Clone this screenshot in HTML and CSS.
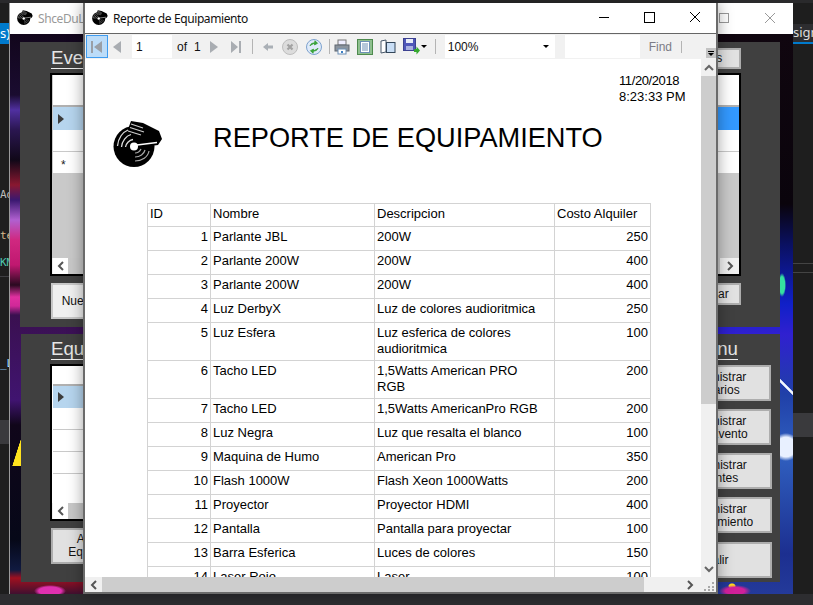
FILE: index.html
```html
<!DOCTYPE html>
<html lang="es">
<head>
<meta charset="utf-8">
<title>Reporte de Equipamiento</title>
<link rel="stylesheet" href="styles.css">
</head>
<body>
<svg class="sprite" width="0" height="0" aria-hidden="true">
  <symbol id="logo" viewBox="0 0 50 50">
    <circle cx="21" cy="26.500" r="20.500" fill="#000"/>
    <path d="M18 1 30 3 46 11 49 19 45 25 30 27 24 20 14 12Z" fill="#000"/>
    <path d="M4.500 26C5 18 10 12 15 10M8.500 27C9 21 13 16 18 14.500M12.500 27C13 24 16 20 20 19.500" fill="none" stroke="#ddd" stroke-width="1.300"/>
    <path d="M18 4 30 8M17 7.500 31 12M15 11 28 15" fill="none" stroke="#ccc" stroke-width="1.200"/>
    <path d="M24 25 44 22.500" fill="none" stroke="#fff" stroke-width="1.600"/>
    <path d="M28 29C27 31 25 33 22 33M32 30C31 34 27 37 22 37M36 31C35 37 29 41 22 41" fill="none" stroke="#aaa" stroke-width="1.200"/>
    <circle cx="21" cy="26.500" r="4" fill="#fff"/>
  </symbol>
  <symbol id="chev-l" viewBox="0 0 10 10"><path d="M7 1 3 5 7 9" fill="none" stroke="#555" stroke-width="2"/></symbol>
  <symbol id="chev-r" viewBox="0 0 10 10"><path d="M3 1 7 5 3 9" fill="none" stroke="#555" stroke-width="2"/></symbol>
</svg>

<div class="desktop">
  <div class="ide-left">
    <div class="ide-tab">s)</div>
    <div class="ide-code ad">Ad</div>
    <div class="ide-code te">te</div>
    <div class="ide-code km">KM</div>
    <div class="ide-rule"></div>
    <div class="ide-code ll">_L</div>
    <div class="ide-band"></div>
  </div>
  <div class="ide-right">
    <div class="ide-tab-r">sign</div>
    <div class="ide-rule r1"></div>
    <div class="ide-rule r2"></div>
    <div class="ide-band r3"></div>
  </div>

  <section class="win back">
    <header class="back-title">
      <svg class="t-icon"><use href="#logo"/></svg>
      <span class="back-name">ShceDuLe</span>
      <span class="back-ctl">
        <svg width="10" height="10" viewBox="0 0 10 10"><rect x=".5" y=".5" width="9" height="9" fill="none" stroke="#999"/></svg>
        <svg width="10" height="10" viewBox="0 0 10 10"><path d="M0 0 10 10M10 0 0 10" stroke="#999"/></svg>
      </span>
    </header>
    <div class="back-body">
      <div class="panel panel-a">
        <div class="p-head">
          <h2 class="p-title">Eventos</h2>
          <button class="btn btn-rep">Reportes</button>
        </div>
        <div class="dgrid grid-a">
          <div class="dg-row hd-a"><i class="rh"></i></div>
          <div class="dg-row sel"><i class="rh"><b class="arrow"></b></i><i class="fill"></i></div>
          <div class="dg-row"><i class="rh"></i></div>
          <div class="dg-row"><i class="rh star">*</i></div>
          <div class="dg-scroll">
            <span class="sb-end"><svg class="ch"><use href="#chev-l"/></svg></span>
            <span class="sb-thumb"></span>
            <span class="sb-end"><svg class="ch"><use href="#chev-r"/></svg></span>
          </div>
        </div>
        <div class="p-foot">
          <button class="btn btn-new">Nuevo</button>
          <button class="btn btn-del">Eliminar</button>
        </div>
      </div>

      <div class="panel panel-b">
        <div class="col-left">
          <div class="p-head head-b"><h2 class="p-title">Equipos</h2></div>
          <div class="dgrid grid-b">
            <div class="dg-row hd-b"><i class="rh"></i></div>
            <div class="dg-row sel-b"><i class="rh"><b class="arrow"></b></i></div>
            <div class="dg-row"><i class="rh"></i></div>
            <div class="dg-row"><i class="rh"></i></div>
            <div class="dg-row"><i class="rh"></i></div>
            <div class="dg-scroll">
              <span class="sb-end"><svg class="ch"><use href="#chev-l"/></svg></span>
              <span class="sb-thumb"></span>
            </div>
          </div>
          <button class="btn btn-add">Alta<br>Equipo</button>
        </div>
        <div class="col-menu">
          <div class="p-head head-m"><h2 class="p-title">Menu</h2></div>
          <div class="menu">
            <button class="btn m-btn">Administrar<br>Usuarios</button>
            <button class="btn m-btn">Administrar<br>Tipo Evento</button>
            <button class="btn m-btn wide">Administrar<br>Clientes</button>
            <button class="btn m-btn wide">Administrar<br>Equipamiento</button>
            <button class="btn m-btn wide exit">Salir</button>
          </div>
        </div>
      </div>
    </div>
  </section>

  <section class="win front">
    <header class="f-title">
      <svg class="t-icon"><use href="#logo"/></svg>
      <span class="f-name">Reporte de Equipamiento</span>
      <span class="f-ctl">
        <svg width="12" height="12" viewBox="0 0 12 12"><path d="M0 5.500H10" stroke="#000"/></svg>
        <svg width="12" height="12" viewBox="0 0 12 12"><rect x=".5" y=".5" width="10" height="10" fill="none" stroke="#000"/></svg>
        <svg width="12" height="12" viewBox="0 0 12 12"><path d="M1 0 11 10M11 0 1 10" stroke="#000"/></svg>
      </span>
    </header>

    <div class="toolbar">
      <span class="tb-btn first"><svg width="16" height="16" viewBox="0 0 16 16"><path d="M2 2H4V14H2ZM13 2V14L5 8Z" fill="#9a9fa6"/></svg></span>
      <span class="tb-ico w-prev"><svg width="10" height="14" viewBox="0 0 10 14"><path d="M9 1V13L1 7Z" fill="#a9adb2"/></svg></span>
      <span class="tb-input page">1</span>
      <span class="tb-text of">of</span>
      <span class="tb-text total">1</span>
      <span class="tb-ico w-next"><svg width="10" height="14" viewBox="0 0 10 14"><path d="M1 1V13L9 7Z" fill="#a9adb2"/></svg></span>
      <span class="tb-ico w-last"><svg width="12" height="14" viewBox="0 0 12 14"><path d="M1 1V13L8 7ZM9 1H11V13H9Z" fill="#a9adb2"/></svg></span>
      <span class="sep s1"></span>
      <span class="tb-ico w-back"><svg width="12" height="12" viewBox="0 0 12 12"><path d="M1 6 6 2V4.500H11V7.500H6V10Z" fill="#aab0b6"/></svg></span>
      <span class="tb-ico w-stop"><svg width="16" height="16" viewBox="0 0 16 16"><circle cx="8" cy="8" r="7.500" fill="#dcdcdc" stroke="#bdbdbd"/><path d="M5.500 5.500 10.500 10.500M10.500 5.500 5.500 10.500" stroke="#a2a2a2" stroke-width="2.200"/></svg></span>
      <span class="tb-ico w-ref"><svg width="16" height="16" viewBox="0 0 16 16"><circle cx="8" cy="8" r="7.500" fill="#dfeafa" stroke="#7da2ce"/><path d="M4 7C4.500 5 6.500 3.500 9 4.200M9 1.800 11.500 4.300 8.500 5.800Z" fill="#39a33a" stroke="#39a33a"/><path d="M12 9C11.500 11 9.500 12.500 7 11.800M7 14.200 4.500 11.700 7.500 10.200Z" fill="#39a33a" stroke="#39a33a"/></svg></span>
      <span class="sep s2"></span>
      <span class="tb-ico w-print"><svg width="16" height="16" viewBox="0 0 16 16"><rect x="4" y="1" width="8" height="5" fill="#eef" stroke="#777"/><rect x="1" y="6" width="14" height="6" fill="#8b949e" stroke="#5f6770"/><rect x="4" y="10" width="8" height="5" fill="#fff" stroke="#6d8fb5"/><rect x="7" y="12" width="2" height="2" fill="#3b7fc4"/></svg></span>
      <span class="tb-ico w-page"><svg width="16" height="16" viewBox="0 0 16 16"><rect x=".5" y=".5" width="15" height="15" fill="#8fc08f" stroke="#4e8a4e"/><rect x="3.500" y="2.500" width="9" height="11" fill="#fff" stroke="#6d8fb5"/><path d="M5 5H11M5 7H11M5 9H11M5 11H11" stroke="#6d8fb5"/></svg></span>
      <span class="tb-ico w-layout"><svg width="16" height="16" viewBox="0 0 16 16"><path d="M1 2 6 1V13L1 14Z" fill="#fff" stroke="#48586a"/><rect x="6.500" y="3.500" width="8.500" height="10" fill="#c9def5" stroke="#33465a"/></svg></span>
      <span class="tb-ico w-save"><svg width="17" height="17" viewBox="0 0 17 17"><rect x=".5" y=".5" width="12" height="12" fill="#4f56b8" stroke="#3c4190"/><rect x="3" y="1" width="7" height="4" fill="#e8ecf8"/><rect x="3" y="8" width="7" height="4" fill="#a9b0e0"/><path d="M11 11H13.500V8.500L17 12.500 13.500 16.500V14H11Z" fill="#35a82f"/></svg></span>
      <span class="tb-drop d1"></span>
      <span class="sep s3"></span>
      <span class="tb-input zoom">100%<i class="tb-drop d2"></i></span>
      <span class="tb-input find"></span>
      <span class="tb-find">Find</span>
      <span class="sep s4"></span>
      <span class="tb-over"><i class="over-line"></i><i class="tb-drop d3"></i></span>
    </div>

    <div class="f-main">
      <div class="report">
        <div class="stamp"><span class="stamp-date">11/20/2018</span><br>8:23:33 PM</div>
        <div class="r-head">
          <svg class="r-logo"><use href="#logo"/></svg>
          <h1 class="r-title">REPORTE DE EQUIPAMIENTO</h1>
        </div>
        <table class="r-table">
          <colgroup><col class="c1"><col class="c2"><col class="c3"><col class="c4"></colgroup>
          <tr class="r-hd"><td>ID</td><td>Nombre</td><td>Descripcion</td><td>Costo Alquiler</td></tr>
          <tr><td class="n">1</td><td>Parlante JBL</td><td>200W</td><td class="n">250</td></tr>
          <tr><td class="n">2</td><td>Parlante 200W</td><td>200W</td><td class="n">400</td></tr>
          <tr><td class="n">3</td><td>Parlante 200W</td><td>200W</td><td class="n">400</td></tr>
          <tr><td class="n">4</td><td>Luz DerbyX</td><td>Luz de colores audioritmica</td><td class="n">250</td></tr>
          <tr><td class="n">5</td><td>Luz Esfera</td><td>Luz esferica de colores<br>audioritmica</td><td class="n">100</td></tr>
          <tr><td class="n">6</td><td>Tacho LED</td><td>1,5Watts American PRO<br>RGB</td><td class="n">200</td></tr>
          <tr><td class="n">7</td><td>Tacho LED</td><td>1,5Watts AmericanPro RGB</td><td class="n">200</td></tr>
          <tr><td class="n">8</td><td>Luz Negra</td><td>Luz que resalta el blanco</td><td class="n">100</td></tr>
          <tr><td class="n">9</td><td>Maquina de Humo</td><td>American Pro</td><td class="n">350</td></tr>
          <tr><td class="n">10</td><td>Flash 1000W</td><td>Flash Xeon 1000Watts</td><td class="n">200</td></tr>
          <tr><td class="n">11</td><td>Proyector</td><td>Proyector HDMI</td><td class="n">400</td></tr>
          <tr><td class="n">12</td><td>Pantalla</td><td>Pantalla para proyectar</td><td class="n">100</td></tr>
          <tr><td class="n">13</td><td>Barra Esferica</td><td>Luces de colores</td><td class="n">150</td></tr>
          <tr><td class="n">14</td><td>Laser Rojo</td><td>Laser</td><td class="n">100</td></tr>
        </table>
      </div>
      <div class="v-scroll">
        <span class="v-end"><svg width="10" height="10" viewBox="0 0 10 10"><path d="M1 7 5 3 9 7" fill="none" stroke="#666" stroke-width="2"/></svg></span>
        <span class="v-thumb"></span>
        <span class="v-end bottom"><svg width="10" height="10" viewBox="0 0 10 10"><path d="M1 3 5 7 9 3" fill="none" stroke="#666" stroke-width="2"/></svg></span>
      </div>
    </div>

    <div class="h-scroll">
      <span class="h-end"><svg class="ch"><use href="#chev-l"/></svg></span>
      <span class="h-thumb"></span>
      <span class="h-end"><svg class="ch"><use href="#chev-r"/></svg></span>
      <span class="grip"><svg width="15" height="15" viewBox="0 0 15 15"><path d="M11 5h2v2h-2zM7 9h2v2H7zM11 9h2v2h-2zM3 12h2v2H3zM7 12h2v2H7zM11 12h2v2h-2z" fill="#a8a8a8"/></svg></span>
    </div>
  </section>
</div>
</body>
</html>
```
FILE: styles.css
```css
* { box-sizing: border-box; }
html, body { margin: 0; padding: 0; }
body { font-family: "Liberation Sans", Arial, sans-serif; font-size: 12px; overflow: hidden; }
i, b { font-style: normal; font-weight: normal; }
.sprite { position: absolute; }

.desktop {
  position: relative; width: 813px; height: 605px; overflow: hidden;
  background: linear-gradient(#2a2a2c 0 3px, #1e1e1e 3px 594px, #2d2d30 594px);
  display: flex; justify-content: space-between;
}

/* IDE behind the windows */
.ide-left, .ide-right { font-family: "DejaVu Sans Mono", monospace; color: #ccc; overflow: hidden; white-space: nowrap; }
.ide-left { width: 9px; direction: rtl; }
.ide-right { width: 20px; }
.ide-tab { margin-top: 23px; height: 21px; background: #007acc; color: #fff; font: 13px/20px "Noto Sans", sans-serif; direction: ltr; text-align: right; }
.ide-code { height: 14px; line-height: 14px; font-size: 11px; direction: ltr; width: 9px; overflow: hidden; }
.ad { margin-top: 144px; color: #bbb; }
.te { margin-top: 27px; color: #d6b98c; }
.km { margin-top: 13px; color: #4ec9b0; }
.ide-rule { height: 1px; background: #3e3e42; margin-top: 6px; }
.ll { margin-top: 80px; color: #9cdcfe; }
.ide-band { height: 24px; margin-top: 49px; background: #3a3a3d; }
.ide-tab-r { margin-top: 24px; height: 20px; border-bottom: 2px solid #007acc; font: 13px/17px "Noto Sans", sans-serif; color: #ddd; background: #2d2d30; }
.r1 { margin-top: 219px; background: #444; }
.r2 { margin-top: 8px; background: #444; }
.r3 { margin-top: 140px; }

/* windows */
.win { position: absolute; top: 3px; display: flex; flex-direction: column; height: 591px; }
.back { left: 9px; width: 784px; border-left: 1px solid #9a9a9a; background: #333; }
.front { left: 83px; width: 635px; background: #fff; border: 2px solid #6b6b6b; border-top: 0; box-shadow: 0 0 14px rgba(0, 0, 0, .38); }

.t-icon { width: 16px; height: 16px; flex: none; }

.back-title { height: 31px; flex: none; background: #fff; display: flex; align-items: center; padding-left: 7px; padding-bottom: 1px; }
.back-name { margin-left: 5px; font: 12px "Noto Sans", sans-serif; letter-spacing: -.4px; color: #999; }
.back-ctl { margin-left: auto; display: flex; gap: 36px; padding-right: 18px; }

.back-body {
  flex: 1; padding: 8px 13px 12px 10px; display: flex; flex-direction: column; gap: 7px;
  background:
    linear-gradient(to bottom right, transparent 50%, #ffe21e 53%) 2px 404px / 9px 28px no-repeat,
    radial-gradient(ellipse 4px 12px at 772px 251px, #35e0a0 0 70%, transparent 100%),
    linear-gradient(45deg, transparent 42%, #f4f8ff 46% 54%, transparent 58%) right 0 top 344px / 13px 18px no-repeat,
    radial-gradient(ellipse 14px 14px at 776px 413px, #e8f0ff 0 70%, transparent 100%),
    radial-gradient(ellipse 16px 6px at 40px 557px, #e030b0 0 70%, transparent 100%),
    radial-gradient(ellipse 16px 6px at 725px 557px, #d0209a 0 60%, transparent 100%),
    radial-gradient(ellipse 4px 3px at 722px 552px, #ffd820 0 70%, transparent 100%),
    linear-gradient(#10060f 0, #0a040c 170px, #0a1060 210px, #1020c8 270px, #3020d0 300px, #2040a8 360px, #3060c0 420px, #1c2f90 520px, #243a9a 560px) right top / 80px 100% no-repeat,
    linear-gradient(#12061c 0, #1a0c30 61px, #5030a0 76px, #2a1650 96px, #100818 126px, #8a1830 151px, #3a1870 166px, #b060d0 186px, #d02880 206px, #c01870 231px, #2a0a20 251px, #e030a0 263px, #d02898 272px, #3a1050 281px, #401470 366px, #10061a 391px, #060818 506px, #101a40 536px, #a01020 544px, #401030 560px);
}

.panel { background: #404040; flex: none; }
.panel-a { height: 285px; width: 760px; padding: 0 39px 0 30px; }
.panel-b { height: 248px; width: 759px; margin-left: 1px; padding: 0 9px 0 29px; display: flex; justify-content: space-between; }

.p-head { display: flex; justify-content: space-between; align-items: flex-start; padding: 6px 0 0 1px; height: 31px; }
.head-b { padding-top: 5px; height: 30px; }
.head-m { padding: 5px 33px 0 0; height: 31px; justify-content: flex-end; }
.p-title { margin: 0; font-size: 18.67px; font-weight: normal; line-height: 20px; height: 21px; color: #e6e6e6; border-bottom: 1px solid #eee; }

.btn { display: block; font: 12px/13px "Liberation Sans", sans-serif; color: #111; background: #e1e1e1; border: 2px solid #adadad; padding: 0; text-align: center; }
.btn-rep { width: 86px; height: 21px; }
.btn-new { width: 56px; height: 36px; background: #f0f0f0; border-color: #c8c8c8; }
.btn-del { width: 68px; height: 22px; }
.btn-add { width: 72px; height: 36px; margin: 7px 0 0 1px; }

.dgrid { border: 2px solid #000; background: #c9c9c9; display: flex; flex-direction: column; overflow: hidden; }
.grid-a { height: 203px; }
.grid-b { height: 157px; width: 600px; background: #fff; }

.dg-row { height: 22px; flex: none; background: #fff; border-bottom: 1px solid #c9c9c9; display: flex; margin-left: 1px; }
.rh { width: 30px; flex: none; display: flex; align-items: center; padding-left: 5px; }
.fill { flex: 1; background: #3399ff; }
.hd-a { height: 32px; border-bottom: 2px solid #b0b0b0; }
.hd-b { height: 20px; border-bottom: 2px solid #b0b0b0; }
.sel { height: 23px; border: 0; background: #b6d5ee; }
.sel-b { height: 22px; border: 0; background: #b6d5ee; }
.sel-b .rh { width: 100%; }
.arrow { display: block; width: 0; height: 0; border-left: 6px solid #3c3c3c; border-top: 5px solid transparent; border-bottom: 5px solid transparent; }
.star { font-size: 12px; padding: 4px 0 0 8px; color: #222; }

.dg-scroll { margin-top: auto; height: 16px; flex: none; display: flex; background: #f0f0f0; }
.sb-end { width: 15px; flex: none; display: flex; align-items: center; justify-content: center; }
.sb-thumb { flex: 1; background: #c8c8c8; }
.dg-scroll .sb-end:first-child { background: #fff; margin-left: 1px; }
.dg-scroll .sb-end:last-child { width: 19px; }
.ch { width: 10px; height: 10px; }

.p-foot { display: flex; justify-content: space-between; align-items: flex-start; padding: 7px 0 0 1px; }

.col-left { width: 602px; }
.col-menu { width: 110px; }
.menu { display: flex; flex-direction: column; gap: 8px; }
.m-btn { width: 110px; height: 36px; padding-top: 1px; }
.wide { width: 111px; }
.exit { margin-top: 1px; }

/* front window */
.f-title { height: 31px; flex: none; background: #fff; border-bottom: 1px solid #666; display: flex; align-items: center; padding-left: 7px; }
.f-name { margin-left: 5px; font: 12px "Noto Sans", sans-serif; letter-spacing: -.4px; color: #111; }
.f-ctl { margin-left: auto; display: flex; gap: 33px; padding-right: 15px; }

.toolbar { height: 25px; flex: none; background: #f1f1f1; display: flex; align-items: center; padding: 0 0 0 1px; position: relative; }
.tb-btn { width: 22px; height: 23px; flex: none; display: flex; align-items: center; justify-content: center; background: #bcdcf8; border: 1px solid #3f9cf0; }
.tb-ico { flex: none; display: flex; align-items: center; justify-content: center; height: 22px; }
.w-prev { width: 10px; margin-left: 4px; }
.w-next { width: 10px; margin-left: 8px; }
.w-last { width: 12px; margin-left: 11px; }
.w-back { width: 12px; margin-left: 9px; }
.w-stop { width: 16px; margin-left: 8px; }
.w-ref { width: 16px; margin-left: 8px; }
.w-print { width: 16px; margin-left: 4px; }
.w-page { width: 16px; margin-left: 7px; }
.w-layout { width: 16px; margin-left: 7px; }
.w-save { width: 17px; margin-left: 7px; }
.tb-input { flex: none; height: 23px; background: #fff; display: flex; align-items: center; color: #111; position: relative; }
.page { width: 40px; margin-left: 10px; padding-left: 4px; }
.tb-text { flex: none; color: #111; }
.of { margin-left: 5px; }
.total { margin-left: 7px; }
.sep { flex: none; width: 1px; height: 15px; background: #b4b4b4; }
.s1 { margin-left: 10px; }
.s2 { margin-left: 7px; }
.s3 { margin-left: 8px; }
.s4 { margin-left: 9px; height: 12px; }
.tb-drop { display: block; flex: none; width: 0; height: 0; border-top: 3px solid #000; border-left: 3px solid transparent; border-right: 3px solid transparent; }
.d1 { margin-left: 1px; }
.zoom { width: 110px; margin-left: 9px; padding-left: 3px; }
.d2 { position: absolute; right: 6px; top: 10px; }
.find { width: 75px; margin-left: 10px; }
.tb-find { flex: none; margin-left: 9px; color: #7c7c86; }
.tb-over { position: absolute; right: 0; bottom: 1px; width: 10px; height: 10px; background: #c3c3c3; display: flex; flex-direction: column; align-items: center; justify-content: center; gap: 1px; }
.over-line { display: block; width: 6px; height: 1px; background: #000; }

.f-main { height: 518px; flex: none; display: flex; background: #fff; }
.report { width: 616px; flex: none; overflow: hidden; }
.stamp { padding: 14px 0 0 534px; line-height: 16px; color: #000; font-size: 13px; height: 46px; white-space: nowrap; }
.stamp-date { letter-spacing: -.4px; }
.r-head { display: flex; align-items: flex-start; height: 98px; padding: 15px 0 0 28px; }
.r-logo { width: 50px; height: 50px; flex: none; }
.r-title { margin: 2px 0 0 50px; font-size: 27.2px; line-height: 32px; font-weight: normal; color: #000; white-space: nowrap; }

.r-table { margin-left: 62px; width: 503px; font-size: 13px; table-layout: fixed; border-collapse: collapse; }
.c1 { width: 63px; } .c2 { width: 164px; } .c3 { width: 180px; } .c4 { width: 96px; }
.r-table tr { height: 24px; }
.r-table .r-hd { height: 23px; }
.r-table td { border: 1px solid #d3d3d3; padding: 2px 2px 3px; line-height: 16px; vertical-align: top; color: #000; overflow: hidden; white-space: nowrap; }
.r-table .n { text-align: right; }

.v-scroll { width: 15px; flex: none; background: #f0f0f0; display: flex; flex-direction: column; }
.v-end { height: 17px; flex: none; display: flex; align-items: center; justify-content: center; background: #f0f0f0; }
.v-thumb { height: 328px; flex: none; background: #cdcdcd; }
.v-end.bottom { margin-top: auto; }

.h-scroll { height: 15px; flex: none; display: flex; background: #f0f0f0; }
.h-end { width: 17px; flex: none; display: flex; align-items: center; justify-content: center; }
.h-thumb { width: 542px; flex: none; background: #cdcdcd; }
.h-thumb + .h-end { margin-left: auto; width: 22px; }
.grip { width: 15px; flex: none; }
```
